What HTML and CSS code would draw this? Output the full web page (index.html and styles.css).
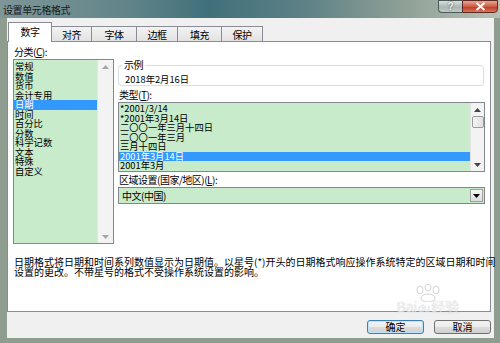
FILE: index.html
```html
<!DOCTYPE html>
<html lang="zh-CN">
<head>
<meta charset="UTF-8">
<title>设置单元格格式</title>
<link rel="stylesheet" href="styles.css">
</head>
<body>
    <div class="window">
        <!-- title bar -->
        <div class="titlebar">
            <span class="title">设置单元格格式</span>
            <div class="caption">
                <span class="cap-help">?</span>
                <span class="cap-close">
                    <svg width="11" height="9" viewBox="0 0 11 9"><path d="M1.5 1 L9.5 8 M9.5 1 L1.5 8" stroke="#fff" stroke-width="2"/></svg>
                </span>
            </div>
        </div>

        <div class="client">
            <!-- tabs -->
            <div class="tabs">
                <div class="tab active">数字</div>
                <div class="tab w41">对齐</div>
                <div class="tab w46">字体</div>
                <div class="tab w42">边框</div>
                <div class="tab w45">填充</div>
                <div class="tab w42">保护</div>
            </div>

            <div class="panel">
                <div class="top">
                    <div class="cat">
                        <div class="label">分类(<u>C</u>):</div>
                        <div class="listbox cat-list">
                            <div class="items">
                                <div class="item">常规</div>
                                <div class="item">数值</div>
                                <div class="item">货币</div>
                                <div class="item">会计专用</div>
                                <div class="item sel">日期</div>
                                <div class="item">时间</div>
                                <div class="item">百分比</div>
                                <div class="item">分数</div>
                                <div class="item">科学记数</div>
                                <div class="item">文本</div>
                                <div class="item">特殊</div>
                                <div class="item">自定义</div>
                            </div>
                            <div class="vscroll wide">
                                <svg class="arrow" width="7" height="4" viewBox="0 0 7 4"><path d="M0 4 L3.5 0 L7 4 Z" fill="#a6a6a6"/></svg>
                                <svg class="arrow" width="7" height="4" viewBox="0 0 7 4"><path d="M0 0 L3.5 4 L7 0 Z" fill="#a6a6a6"/></svg>
                            </div>
                        </div>
                    </div>

                    <div class="detail">
                        <fieldset class="sample">
                            <legend>示例</legend>
                            <div class="sample-value">2018年2月16日</div>
                        </fieldset>

                        <div class="label">类型(<u>T</u>):</div>
                        <div class="listbox type-list">
                            <div class="items">
                                <div class="item">*2001/3/14</div>
                                <div class="item">*2001年3月14日</div>
                                <div class="item">二〇〇一年三月十四日</div>
                                <div class="item">二〇〇一年三月</div>
                                <div class="item">三月十四日</div>
                                <div class="item sel">2001年3月14日</div>
                                <div class="item">2001年3月</div>
                            </div>
                            <div class="vscroll">
                                <svg class="arrow" width="7" height="4" viewBox="0 0 7 4"><path d="M0 4 L3.5 0 L7 4 Z" fill="#444"/></svg>
                                <div class="thumb"></div>
                                <div class="spacer"></div>
                                <svg class="arrow" width="7" height="4" viewBox="0 0 7 4"><path d="M0 0 L3.5 4 L7 0 Z" fill="#444"/></svg>
                            </div>
                        </div>

                        <div class="label region">区域设置(国家/地区)(<u>L</u>):</div>
                        <div class="combo">
                            <span class="combo-text">中文(中国)</span>
                            <span class="combo-btn">
                                <svg width="7" height="4" viewBox="0 0 7 4"><path d="M0 0 L3.5 4 L7 0 Z" fill="#000"/></svg>
                            </span>
                        </div>
                    </div>
                </div>

                <p class="desc">日期格式将日期和时间系列数值显示为日期值。以星号(*)开头的日期格式响应操作系统特定的区域日期和时间<br>设置的更改。不带星号的格式不受操作系统设置的影响。</p>
            </div>

            <div class="footer">
                <button class="btn ok">确定</button>
                <button class="btn">取消</button>
            </div>
        </div>
    </div>

    <!-- watermark over the dialog -->
    <div class="watermark">
        <svg width="34" height="18" viewBox="0 0 34 18">
            <ellipse cx="9" cy="6" rx="3" ry="4" fill="none" stroke="#c8c8c8"/>
            <ellipse cx="17" cy="3.5" rx="3" ry="3.2" fill="none" stroke="#c8c8c8"/>
            <ellipse cx="25" cy="6" rx="3" ry="4" fill="none" stroke="#c8c8c8"/>
            <ellipse cx="17" cy="14" rx="7" ry="4" fill="none" stroke="#c8c8c8"/>
        </svg>
        <span class="wm-text">Bai<span class="wm-du">du</span>经验</span>
    </div>
</body>
</html>
```

FILE: styles.css
```css
*{
    box-sizing: border-box;
}
body{
    margin: 0;
    width: 500px;
    height: 343px;
    overflow: hidden;
    position: relative;
    font-family: "Noto Sans CJK SC", "Liberation Sans", sans-serif;
    font-size: 10px;
    color: #000000;
    background-color: #8e9d90;
}
.window{
    height: 343px;
    display: flex;
    flex-direction: column;
}
.titlebar{
    height: 18px;
    display: flex;
    justify-content: space-between;
    background: linear-gradient(90deg, #7e9698 0%, #62858a 25%, #41707a 42%, #5c8086 60%, #8c9f95 80%, #b9c1b5 100%);
}
.title{
    padding: 3px 0 0 3px;
    line-height: 13px;
    letter-spacing: -0.4px;
    color: #15201f;
}
.caption{
    display: flex;
    margin-right: 2px;
    height: 13px;
}
.cap-help{
    width: 24px;
    height: 13px;
    border: 1px solid #4a5a58;
    border-right: none;
    border-radius: 0 0 0 4px;
    background: linear-gradient(#d9e0de, #aab6b3 55%, #bfc8c4);
    color: #f4f4f4;
    font-family: "Liberation Sans", sans-serif;
    font-weight: bold;
    font-size: 10px;
    line-height: 11px;
    text-align: center;
    text-shadow: 0 0 2px #333;
}
.cap-close{
    width: 36px;
    height: 13px;
    border: 1px solid #5b2a22;
    border-radius: 0 0 4px 0;
    background: linear-gradient(#e6a796, #cd5c47 50%, #c33f27 60%, #d9765d);
    display: flex;
    align-items: center;
    justify-content: center;
}
.client{
    flex: 1;
    margin: 0 6px 5px 7px;
    background-color: #f0f0f0;
    display: flex;
    flex-direction: column;
}
.tabs{
    height: 23px;
    display: flex;
    align-items: flex-end;
    padding-left: 2px;
    position: relative;
    z-index: 1;
}
.tab{
    height: 15px;
    margin-left: -1px;
    border: 1px solid #898c95;
    border-bottom: none;
    background: linear-gradient(#f3f3f3, #e2e2e2);
    display: flex;
    align-items: center;
    justify-content: center;
    letter-spacing: -0.4px;
}
.tab.active{
    width: 44px;
    height: 20px;
    margin-bottom: -1px;
    padding-bottom: 3px;
    background: #ffffff;
    position: relative;
    z-index: 2;
}
.w41{ width: 41px; }
.w42{ width: 42px; }
.w45{ width: 45px; }
.w46{ width: 46px; }
.panel{
    height: 271px;
    margin-right: 3px;
    border: 1px solid #898c95;
    background-color: #ffffff;
}
.top{
    display: flex;
    padding: 4px 0 0 5px;
}
.cat{
    width: 101px;
}
.label{
    height: 13px;
    line-height: 12px;
    padding-left: 1px;
    letter-spacing: -0.5px;
    white-space: nowrap;
}
.listbox{
    border: 1px solid #828790;
    display: flex;
}
.cat-list{
    height: 185px;
}
.items{
    flex: 1;
    background-color: #c7ebcb;
    padding-top: 2px;
}
.item{
    height: 9.5px;
    line-height: 9.5px;
    padding-left: 1px;
    font-size: 9.3px;
    white-space: nowrap;
}
.item.sel{
    background-color: #3399ff;
    color: #ffffff;
}
.vscroll{
    width: 14px;
    background-color: #f3f3f3;
    border-left: 1px solid #e4e4e4;
    display: flex;
    flex-direction: column;
    align-items: center;
    justify-content: space-between;
    padding: 5px 0 4px;
}
.vscroll.wide{
    width: 16px;
}
.thumb{
    width: 12px;
    height: 12px;
    margin-top: 4px;
    border: 1px solid #9b9b9b;
    border-radius: 2px;
    background: linear-gradient(90deg, #f4f4f4, #e0e0e0);
}
.spacer{
    flex: 1;
}
.detail{
    width: 367px;
    margin-left: 4px;
}
.sample{
    margin: 13px 1px 0 0;
    padding: 2px 5px 0 3px;
    border: 1px solid #d5dfe5;
    border-radius: 3px;
}
.sample legend{
    padding: 0 2px;
    line-height: 12px;
    letter-spacing: -0.5px;
}
.sample-value{
    height: 12px;
    line-height: 12px;
    padding-left: 3px;
    font-size: 9.3px;
}
.sample + .label{
    margin-top: 3px;
}
.type-list{
    height: 70px;
}
.type-list .items{
    padding-top: 1px;
}
.label.region{
    margin-top: 2px;
}
.combo{
    height: 17px;
    border: 1px solid #858585;
    background-color: #c7ebcb;
    display: flex;
    justify-content: space-between;
}
.combo-text{
    padding-left: 3px;
    line-height: 15px;
    letter-spacing: -0.5px;
}
.combo-btn{
    width: 13px;
    margin: 1px;
    border: 1px solid #a0a0a0;
    background: linear-gradient(#f6f6f6, #dcdcdc);
    display: flex;
    align-items: center;
    justify-content: center;
}
.desc{
    margin: 13px 0 0 0;
    padding-left: 6px;
    line-height: 10px;
    white-space: nowrap;
}
.footer{
    display: flex;
    justify-content: flex-end;
    gap: 10px;
    padding: 8px 3px 0 0;
}
.btn{
    width: 57px;
    height: 14px;
    padding: 0;
    border: 1px solid #707070;
    border-radius: 3px;
    background: linear-gradient(#f3f3f3 0%, #ebebeb 50%, #dddddd 51%, #cfcfcf 100%);
    font-family: "Noto Sans CJK SC", sans-serif;
    font-size: 10px;
    line-height: 12px;
    color: #000000;
}
.btn.ok{
    border-color: #3c7fb1;
    box-shadow: inset 0 0 0 1px #bfe3f7;
}
.watermark{
    position: absolute;
    left: 383px;
    top: 284px;
    width: 90px;
    display: flex;
    flex-direction: column;
    align-items: center;
    opacity: 0.8;
}
.wm-text{
    margin-top: -2px;
    font-family: "Liberation Sans", "Noto Sans CJK SC", sans-serif;
    font-size: 14px;
    line-height: 15px;
    color: rgba(255,255,255,0.7);
    text-shadow: 0 0 1px #b5b5b5;
}
.wm-du{
    font-size: 11px;
    margin: 0 1px;
}
```
